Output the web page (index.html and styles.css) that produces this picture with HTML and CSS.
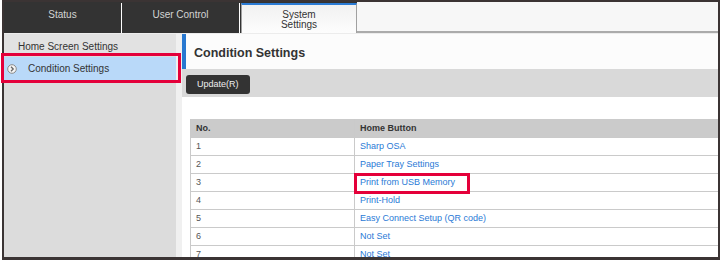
FILE: index.html
```html
<!DOCTYPE html>
<html lang="en">
<head>
  <meta charset="UTF-8" />
  <title>Condition Settings</title>
  <link rel="stylesheet" href="styles.css">
</head>
<body>
  <div class="screen">
    <div class="frame">
      <div class="tabbar">
        <div class="tab">Status</div>
        <div class="tab">User Control</div>
        <div class="tab active">System<br>Settings</div>
        <div class="tab-fill"></div>
      </div>

      <div class="content">
        <div class="sidebar">
          <div class="side-item">Home Screen Settings</div>
          <div class="side-item current">
            <svg class="side-icon" width="10" height="10" viewBox="0 0 10 10">
              <circle cx="5" cy="5" r="4.3" fill="#f4f4f4" stroke="#8a8a8a" stroke-width="1" />
              <path d="M4 2.8 L6.2 5 L4 7.2" fill="none" stroke="#666" stroke-width="1.3" />
            </svg>
            Condition Settings
          </div>
        </div>

        <div class="main">
          <div class="page-title">Condition Settings</div>
          <div class="toolbar">
            <button>Update(R)</button>
          </div>

          <table class="list">
            <tr>
              <th class="col-no">No.</th>
              <th>Home Button</th>
            </tr>
            <tr><td>1</td><td><a href="#">Sharp OSA</a></td></tr>
            <tr><td>2</td><td><a href="#">Paper Tray Settings</a></td></tr>
            <tr><td>3</td><td><a href="#">Print from USB Memory</a></td></tr>
            <tr><td>4</td><td><a href="#">Print-Hold</a></td></tr>
            <tr><td>5</td><td><a href="#">Easy Connect Setup (QR code)</a></td></tr>
            <tr><td>6</td><td><a href="#">Not Set</a></td></tr>
            <tr><td>7</td><td><a href="#">Not Set</a></td></tr>
          </table>
        </div>
      </div>
    </div>

    <!-- highlight marks -->
    <div class="mark mark-side"></div>
    <div class="mark mark-row"></div>
  </div>
</body>
</html>
```

FILE: styles.css
```css
body {
  margin: 0;
  background: #fff;
  font-family: 'Liberation Sans', Arial, sans-serif;
  color: #333;
}

.screen {
  position: relative;
  width: 720px;
  height: 260px;
}

.frame {
  margin-left: 2px;
  width: 718px;
  height: 260px;
  box-sizing: border-box;
  border: 2px solid #3b3434;
  border-bottom-width: 3px;
  overflow: hidden;
  display: flex;
  flex-direction: column;
}

/* tabs */
.tabbar {
  display: flex;
  height: 31px;
  background: #333;
  flex-shrink: 0;
}

.tab {
  width: 117px;
  height: 30px;
  margin-top: 1px;
  border-right: 1px solid #fff;
  color: #d4d4d4;
  font-size: 10px;
  line-height: 24px;
  text-align: center;
  flex-shrink: 0;
}

.tab.active {
  width: 116px;
  height: 30px;
  box-sizing: border-box;
  margin-left: 1px;
  border-top: 2px solid #2b7bd4;
  border-left: 1px solid #a0a0a0;
  border-right: 1px solid #a0a0a0;
  background: linear-gradient(#f1f1f1, #fdfdfd);
  color: #333;
  line-height: 10px;
  padding-top: 5px;
}

.tab-fill {
  flex: 1;
  height: 31px;
  box-sizing: border-box;
  background: #f7f7f7;
  border-bottom: 2px solid #ababab;
}

/* body */
.content {
  flex: 1;
  display: flex;
  background: #f0f0f0;
  border-top: 1px solid #ececec;
}

.sidebar {
  width: 172px;
  flex-shrink: 0;
  background: #dcdcdc;
}

.side-item {
  height: 22px;
  box-sizing: border-box;
  padding: 4px 0 0 14px;
  line-height: 18px;
  font-size: 10px;
  background: #e2e2e2;
  border-bottom: 1px solid #d3d3d3;
}

.side-item.current {
  display: flex;
  align-items: center;
  height: 23px;
  margin-top: 1px;
  padding: 0 0 0 3px;
  background: #b9d9f9;
  border-bottom: none;
}

.side-icon {
  margin-right: 11px;
}

.main {
  flex: 1;
  min-width: 0;
  overflow: hidden;
  margin-left: 6px;
  background: #fff;
}

.page-title {
  height: 35px;
  box-sizing: border-box;
  padding: 3px 0 0 8px;
  line-height: 32px;
  border-left: 4px solid #2878d0;
  background: #fcfcfc;
  font-size: 12.5px;
  font-weight: bold;
}

.toolbar {
  height: 28px;
  box-sizing: border-box;
  padding: 4px;
  background: #d9d9d9;
}

.toolbar button {
  height: 19px;
  padding: 0 11px;
  border: none;
  border-radius: 3px;
  background: #333;
  color: #eee;
  font-family: inherit;
  font-size: 9px;
}

/* table */
.list {
  margin: 22px 0 0 8px;
  width: 560px;
  border-collapse: collapse;
  font-size: 9px;
}

.list th,
.list td {
  height: 18px;
  box-sizing: border-box;
  padding: 0 0 0 5px;
  text-align: left;
  border: 1px solid #cacaca;
  border-top: none;
  border-right: none;
}

.list th {
  background: #cbcbcb;
  color: #333;
}

.list .col-no {
  width: 164px;
}

.list td {
  color: #555;
}

.list a {
  color: #2a7ad6;
  text-decoration: none;
}

/* red highlight marks */
.mark {
  position: absolute;
  box-sizing: border-box;
  border: 3px solid #e4003a;
}

.mark-side {
  left: 1px;
  top: 53px;
  width: 180px;
  height: 30px;
}

.mark-row {
  left: 354px;
  top: 173px;
  width: 116px;
  height: 21px;
}
```
